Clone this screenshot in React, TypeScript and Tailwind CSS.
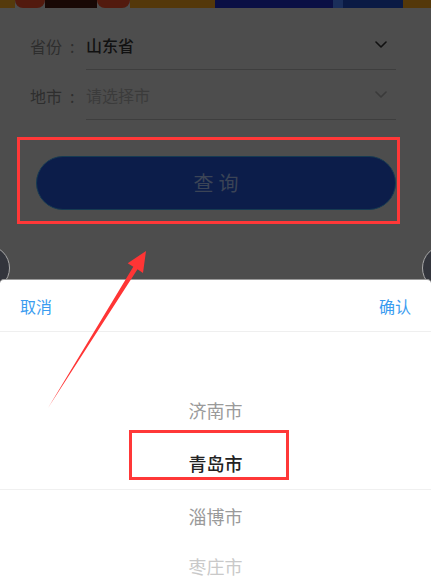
import React from "react";

const cities = [
  { name: "济南市", cls: "text-[#9a9a9a]", h: "h-[53px]" },
  { name: "青岛市", cls: "text-[#222222] font-medium", h: "h-[53px]" },
  { name: "淄博市", cls: "text-[#9a9a9a]", h: "h-[53px]" },
  { name: "枣庄市", cls: "text-[#c9c9c9]", h: "h-[46px]" },
];

const Chevron = ({ color }: { color: string }) => (
  <svg width="12" height="7" viewBox="0 0 12 7" fill="none">
    <path d="M1 1l5 5 5-5" stroke={color} strokeWidth="1.6" strokeLinecap="round" strokeLinejoin="round" />
  </svg>
);

const Label = ({ text }: { text: string }) => (
  <div className="w-[56px] h-[49px] flex items-center text-[16px] text-[#2e2e2e]">
    <span>{text}</span>
    <span className="ml-[8px]">:</span>
  </div>
);

const App = () => {
  return (
    <div
      className="relative w-[431px] h-[585px] overflow-hidden bg-[#4d4d4d] flex flex-col"
      style={{ fontFamily: '"Noto Sans CJK SC", "Noto Sans", sans-serif' }}
    >
      {/* dimmed banner strip */}
      <div className="flex h-[8px] shrink-0">
        <div className="w-[15px] bg-[#553a0c]" />
        <div className="w-[30px] bg-[#521a0e] rounded-b-full" />
        <div className="w-[52px] bg-[#180805]" />
        <div className="w-[33px] bg-[#521a0e] rounded-b-full" />
        <div className="w-[85px] bg-[#54380a]" />
        <div className="w-[118px] bg-[#0a0f44]" />
        <div className="w-[10px] bg-[#1a2e5a]" />
        <div className="w-[60px] bg-[#0a1a44]" />
        <div className="flex-1 bg-[#54380a]" />
      </div>

      {/* form */}
      <div className="pl-[30px] pr-[35px] pt-[12px]">
        <div className="flex items-end">
          <Label text="省份" />
          <div className="flex-1 h-[50px] border-b border-[#3e3e3e] flex items-center justify-between pr-[9px]">
            <span className="text-[16px] font-medium text-[#111111]">山东省</span>
            <Chevron color="#111111" />
          </div>
        </div>
        <div className="flex items-end">
          <Label text="地市" />
          <div className="flex-1 h-[50px] border-b border-[#3e3e3e] flex items-center justify-between pr-[9px]">
            <span className="text-[16px] text-[#3b3b3b]">请选择市</span>
            <Chevron color="#3a3a3a" />
          </div>
        </div>
      </div>

      {/* query button with annotation box */}
      <div className="ml-[17px] mt-[17px] w-[383px] h-[87px] border-[3px] border-[#ff3838] pl-[16px] pr-[1px] pt-[16px]">
        <div className="h-[54px] rounded-full bg-[#0c1d4a] border border-[#163a52] flex items-center justify-center">
          <span className="text-[20px] tracking-[5px] text-[#3b4456] pl-[5px]">查询</span>
        </div>
      </div>

      {/* side circles behind sheet */}
      <div className="absolute top-[245px] left-[-36px] w-[46px] h-[46px] rounded-full bg-[#33353c] border border-[#a8a8a8]" />
      <div className="absolute top-[245px] left-[422px] w-[46px] h-[46px] rounded-full bg-[#33353c] border border-[#a8a8a8]" />

      {/* bottom sheet picker */}
      <div className="absolute left-0 right-0 top-[279px] bottom-0 bg-white rounded-t-[4px] border-t border-[#9a9a9a] flex flex-col z-10 overflow-hidden">
        <div className="shrink-0 h-[52px] border-b border-[#efefef] flex items-center justify-between px-[20px] text-[16px] text-[#3a9cf0]">
          <span>取消</span>
          <span>确认</span>
        </div>
        <div className="shrink-0 pt-[52px] flex flex-col">
          {cities.map((c, i) => (
            <div
              key={c.name}
              className={
                i === 1
                  ? "shrink-0 h-[53px] flex items-center justify-center border-b border-[#f0f0f0]"
                  : "shrink-0 flex items-center justify-center " + c.h
              }
            >
              <span className={"text-[18px] " + c.cls}>{c.name}</span>
            </div>
          ))}
        </div>
      </div>

      {/* annotations */}
      <div className="absolute left-[129px] top-[430px] w-[160px] h-[50px] border-[3px] border-[#ff3838] z-20" />
      <svg className="absolute left-0 top-0 z-20" width="431" height="585" viewBox="0 0 431 585">
        <polygon points="146,251 143,273 137.5,269.3 48,408 133.3,266.7 127.7,263.2" fill="#ff3535" />
      </svg>
    </div>
  );
};

export default App;
